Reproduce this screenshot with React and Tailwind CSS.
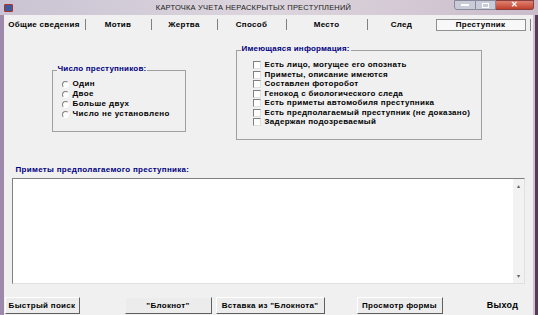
import React from 'react';

const tabs = [
    { label: 'Общие сведения', w: 'w-[82px]' },
    { label: 'Мотив', w: 'w-[66px]' },
    { label: 'Жертва', w: 'w-[66px]' },
    { label: 'Способ', w: 'w-[69px]' },
    { label: 'Место', w: 'w-[81px]' },
    { label: 'След', w: 'w-[69px]' },
];

const counts = ['Один', 'Двое', 'Больше двух', 'Число не установлено'];

const info = [
    'Есть лицо, могущее его опознать',
    'Приметы, описание имеются',
    'Составлен фоторобот',
    'Генокод с биологического следа',
    'Есть приметы автомобиля преступника',
    'Есть предполагаемый преступник (не доказано)',
    'Задержан подозреваемый',
];

const Radio = () => (
    <span className="w-[7px] h-[7px] rounded-full border border-t-[#808080] border-l-[#808080] border-b-white border-r-white bg-white shrink-0" />
);

const Check = () => (
    <span className="w-[8px] h-[8px] border border-t-[#808080] border-l-[#808080] border-b-[#e0e0e0] border-r-[#e0e0e0] bg-white shrink-0" />
);

const Button = ({ children, className }) => (
    <button className={`h-[17px] border border-t-white border-l-white border-b-[#606060] border-r-[#606060] bg-[#ececec] text-[8px] font-bold tracking-[0.3px] ${className}`}>
        {children}
    </button>
);

const App = () => {
    return (
        <div className="w-[538px] h-[315px] flex flex-col bg-[#8b7b9b] overflow-hidden" style={{ fontFamily: '"Liberation Sans", Arial, sans-serif' }}>
            {/* title bar */}
            <div className="h-[15px] flex items-center bg-gradient-to-r from-[#c9c3d3] via-[#ddd6de] to-[#cbbccb]">
                <span className="ml-[4px] w-[9px] h-[8px] bg-[#3a5a9a] border border-[#b03030] rounded-[1px]" />
                <span className="flex-1 text-center text-[7.5px] text-[#202020] tracking-[0.2px] ml-[40px]">КАРТОЧКА УЧЕТА НЕРАСКРЫТЫХ ПРЕСТУПЛЕНИЙ</span>
                <div className="flex items-start self-start mr-[4px] h-[11px]">
                    <span className="w-[22px] h-[10px] bg-[#c8cbd8] border border-[#8a8a9a] rounded-bl-[3px] flex items-center justify-center">
                        <span className="w-[8px] h-[2px] bg-white" />
                    </span>
                    <span className="w-[20px] h-[10px] bg-[#c8cbd8] border-y border-r border-[#8a8a9a] flex items-center justify-center">
                        <span className="w-[7px] h-[5px] border border-white" />
                    </span>
                    <span className="w-[38px] h-[10px] bg-gradient-to-b from-[#e08070] to-[#c0402c] border-y border-r border-[#8a4040] rounded-br-[3px] flex items-center justify-center text-white text-[8px] font-bold leading-none">✕</span>
                </div>
            </div>

            <div className="flex-1 flex">
                <div className="w-[4px] bg-[#9d8aaa]" />
                <div className="flex-1 flex flex-col bg-[#f0f0f0]">
                    {/* tabs */}
                    <div className="h-[19px] flex items-center text-[8px] font-bold tracking-[0.3px] text-black">
                        {tabs.map((t) => (
                            <div key={t.label} className={`${t.w} h-[11px] flex items-center justify-center border-r border-[#808080]`}>
                                {t.label}
                            </div>
                        ))}
                        <div className="ml-[-1px] w-[90px] h-[12px] flex items-center justify-center border border-[#909090] bg-[#f8f8f8]">
                            Преступник
                        </div>
                        <div className="ml-[4px] w-[1px] h-[12px] bg-[#808080]" />
                    </div>

                    {/* groups */}
                    <div className="flex items-start h-[127px]">
                        <div className="ml-[48px] mt-[36px] w-[134px] h-[62px] border border-[#a0a0a0] relative">
                            <span className="absolute left-[4px] top-[-6px] bg-[#f0f0f0] px-[1px] text-[8px] font-bold tracking-[0.2px] text-[#000080] leading-none">Число преступников:</span>
                            <div className="flex flex-col gap-[2px] pl-[9px] pt-[9px]">
                                {counts.map((c) => (
                                    <div key={c} className="flex items-center gap-[4px] h-[8px] text-[8px] font-bold tracking-[0.4px] text-black">
                                        <Radio />
                                        <span>{c}</span>
                                    </div>
                                ))}
                            </div>
                        </div>
                        <div className="ml-[50px] mt-[16px] w-[246px] h-[90px] border border-[#a0a0a0] relative">
                            <span className="absolute left-[4px] top-[-6px] bg-[#f0f0f0] px-[1px] text-[8px] font-bold tracking-[0.2px] text-[#000080] leading-none">Имеющаяся информация:</span>
                            <div className="flex flex-col gap-[1.5px] pl-[16px] pt-[10px]">
                                {info.map((c) => (
                                    <div key={c} className="flex items-center gap-[4px] h-[8px] text-[8px] font-bold tracking-[0.3px] text-black">
                                        <Check />
                                        <span className="whitespace-nowrap">{c}</span>
                                    </div>
                                ))}
                            </div>
                        </div>
                    </div>

                    {/* memo */}
                    <div className="pl-[12px] text-[8px] font-bold tracking-[0.3px] text-[#000080] h-[17px] flex items-center">Приметы предполагаемого преступника:</div>
                    <div className="ml-[8px] mr-[8px] h-[106px] flex bg-white border border-t-[#808080] border-l-[#808080] border-b-[#e0e0e0] border-r-[#e0e0e0]">
                        <div className="flex-1" />
                        <div className="w-[11px] bg-[#f2f2f2] flex flex-col items-center justify-between py-[4px] text-[6px] text-[#606060] leading-none">
                            <span>▴</span>
                            <span>▾</span>
                        </div>
                    </div>

                    {/* buttons */}
                    <div className="flex-1 flex items-end pb-[1px]">
                        <Button className="ml-[1px] w-[75px]">Быстрый поиск</Button>
                        <Button className="ml-[45px] w-[87px] !border-t-[#f0f0f0] !border-l-[#f0f0f0]">"Блокнот"</Button>
                        <Button className="ml-[4px] w-[109px]">Вставка из "Блокнота"</Button>
                        <Button className="ml-[32px] w-[86px]">Просмотр формы</Button>
                        <Button className="ml-[30px] w-[60px] !border-0 !bg-transparent text-[9px]">Выход</Button>
                    </div>
                </div>
                <div className="w-[6px] bg-[#5a3a5a] border-l-2 border-[#d0c0d0]" />
            </div>
        </div>
    );
};

export default App;
